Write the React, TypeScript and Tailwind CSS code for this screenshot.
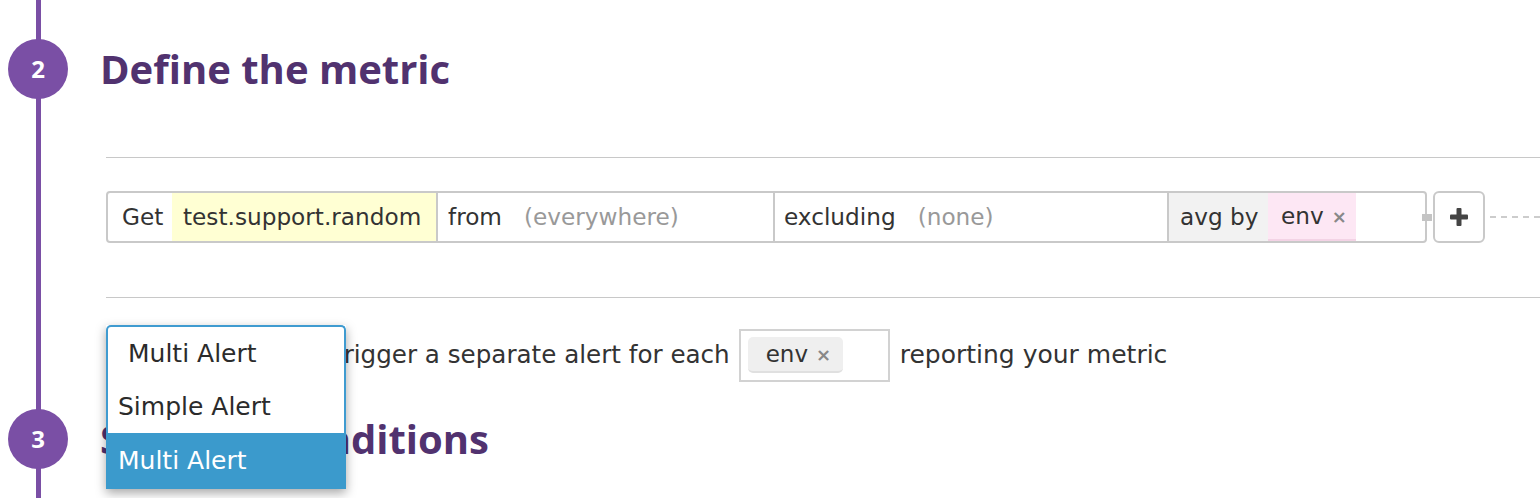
import { ReactNode } from 'react';

const PURPLE = 'bg-[#7a4fa5]';

function StepHeader({ n, title }: { n: number; title: string }) {
  return (
    <div className="flex items-center">
      <div
        className={`ml-[8px] flex h-[60px] w-[60px] shrink-0 items-center justify-center rounded-full ${PURPLE} font-['Open_Sans',sans-serif] text-[24px] font-bold text-white`}
      >
        {n}
      </div>
      <h2 className="ml-[32px] font-['Open_Sans',sans-serif] text-[40px] font-bold leading-none text-[#51326f]">
        {title}
      </h2>
    </div>
  );
}

function Segment({ className, children }: { className: string; children: ReactNode }) {
  return <div className={`flex h-full shrink-0 items-center ${className}`}>{children}</div>;
}

function QueryRow() {
  return (
    <div className="ml-[106px] mt-[33px] flex h-[52px] items-center">
      {/* Query builder */}
      <div className="flex h-full w-[1321px] overflow-hidden rounded-[4px] border-2 border-[#c9c9c9] text-[23.2px]">
        <Segment className="w-[64px] pl-[14px]">Get</Segment>
        <Segment className="w-[264px] bg-[#ffffd3] pl-[11px]">test.support.random</Segment>
        <Segment className="w-[337px] border-l-2 border-[#c9c9c9] pl-[10px]">
          <span>from</span>
          <span className="ml-[22px] text-[#999]">(everywhere)</span>
        </Segment>
        <Segment className="w-[394px] border-l-2 border-[#c9c9c9] pl-[9px]">
          <span>excluding</span>
          <span className="ml-[22px] text-[#999]">(none)</span>
        </Segment>
        <Segment className="w-[101px] border-l-2 border-[#c9c9c9] bg-[#f2f2f2] pl-[11px]">avg by</Segment>
        <Segment className="w-[88px] border-b-2 border-[#f3d3e5] bg-[#fde7f4] pl-[13px]">
          <span>env</span>
          <span className="ml-[8px] text-[18px] font-bold text-[#888]">×</span>
        </Segment>
      </div>

      {/* connector knob */}
      <div className="relative z-10 -ml-[5px] h-[7px] w-[10px] bg-[#c4c4c4]" />

      <button className="ml-px flex h-[52px] w-[52px] shrink-0 items-center justify-center rounded-[6px] border-2 border-[#c9c9c9] bg-white">
        <svg width="20" height="20" viewBox="0 0 20 20">
          <rect x="7.5" y="1" width="5" height="18" rx="1" fill="#444" />
          <rect x="1" y="7.5" width="18" height="5" rx="1" fill="#444" />
        </svg>
      </button>

      <div className="ml-[5px] flex-1 border-t-2 border-dashed border-[#cccccc]" />
    </div>
  );
}

function AlertDropdown() {
  return (
    <div className="absolute left-0 top-[-2px] z-20 w-[240px] text-[25px] shadow-[0_4px_10px_rgba(0,0,0,0.35)]">
      <div className="rounded-t-[5px] border-2 border-b-0 border-[#3f9bd0] bg-white text-[#2b2b2b]">
        <div className="flex h-[54px] items-center pl-[20px]">Multi Alert</div>
        <div className="flex h-[52px] items-center pl-[10px]">Simple Alert</div>
      </div>
      <div className="flex h-[56px] items-center bg-[#3b9acc] pl-[12px] text-white">Multi Alert</div>
    </div>
  );
}

function AlertRow() {
  return (
    <div className="relative z-10 ml-[106px] mt-[29px] flex h-[56px] items-center text-[24.6px]">
      {/* closed select sits under the open list */}
      <div className="w-[228px] shrink-0" />
      <span className="whitespace-nowrap">trigger a separate alert for each</span>
      <div className="ml-[9px] flex h-[53px] w-[151px] shrink-0 items-center border-2 border-[#d2d2d2] pl-[7px]">
        <div className="flex h-[36px] w-[95px] items-center rounded-[5px] border-b-2 border-[#e0e0e0] bg-[#efefef] pl-[18px] text-[23px]">
          <span>env</span>
          <span className="ml-[8px] text-[18px] font-bold text-[#888]">×</span>
        </div>
      </div>
      <span className="ml-[10px] whitespace-nowrap text-[25px]">reporting your metric</span>
      <AlertDropdown />
    </div>
  );
}

export default function App() {
  return (
    <div className="relative h-[498px] w-[1540px] overflow-hidden bg-white font-['DejaVu_Sans',sans-serif] text-[#333]">
      {/* timeline rail */}
      <div className={`absolute bottom-0 left-[36px] top-0 w-[5px] ${PURPLE}`} />

      <div className="relative pt-[39px]">
        <StepHeader n={2} title="Define the metric" />
        <div className="ml-[106px] mt-[58px] h-px bg-[#c8c8c8]" />
        <QueryRow />
        <div className="ml-[106px] mt-[54px] h-px bg-[#c8c8c8]" />
        <AlertRow />
        <div className="mt-[26px]">
          <StepHeader n={3} title="Set alert conditions" />
        </div>
      </div>
    </div>
  );
}
